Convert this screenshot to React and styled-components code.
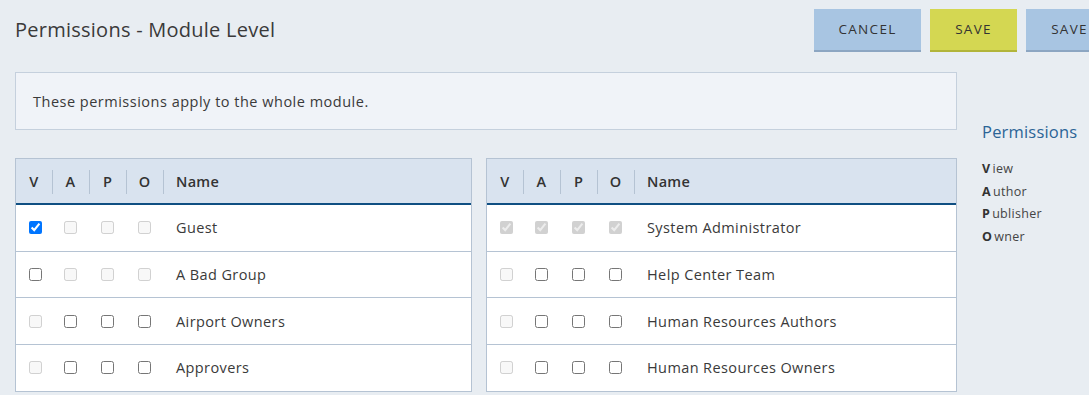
import styled, { createGlobalStyle } from "styled-components";

const GlobalStyle = createGlobalStyle`
    html, body {
        margin: 0;
        padding: 0;
        background: #e8edf2;
        overflow: hidden;
    }
    body {
        font-family: "Open Sans", "Liberation Sans", sans-serif;
        color: #333;
    }
`;

const Page = styled.div`
    display: flex;
    flex-direction: column;
    width: 1089px;
`;

const Header = styled.div`
    display: flex;
    align-items: center;
    height: 60px;
    padding-left: 15px;
`;

const Title = styled.h1`
    flex: 1;
    margin: 0;
    font-size: 20px;
    font-weight: 400;
    letter-spacing: 0.25px;
    color: #3a3a3a;
    padding-bottom: 2px;
`;

const Buttons = styled.div`
    display: flex;
    gap: 9px;
    margin-right: -24px;
    flex-shrink: 0;
`;

const Button = styled.button`
    width: ${(p) => p.$w}px;
    height: 43px;
    padding: 0;
    border: 0;
    border-bottom: 2px solid ${(p) => (p.$primary ? "#b2b53a" : "#8ca6c2")};
    background: ${(p) => (p.$primary ? "#d4d752" : "#a8c5e2")};
    color: #333;
    font-family: inherit;
    font-size: 13.5px;
    letter-spacing: 1.3px;
    white-space: nowrap;
    cursor: pointer;
`;

const Body = styled.div`
    display: flex;
    padding: 12px 0 0 15px;
`;

const Main = styled.div`
    width: 942px;
    display: flex;
    flex-direction: column;
`;

const Info = styled.div`
    height: 56px;
    display: flex;
    align-items: center;
    padding: 0 17px;
    background: #f0f3f8;
    border: 1px solid #c5d0dd;
    font-size: 14.5px;
    letter-spacing: 0.5px;
    color: #3a3a3a;
`;

const Tables = styled.div`
    display: grid;
    grid-template-columns: 457px 1fr;
    gap: 14px;
    margin-top: 28px;
`;

const Table = styled.div`
    background: #fff;
    border: 1px solid #b5c3d3;
    border-bottom: 0;
`;

const HeadRow = styled.div`
    display: grid;
    grid-template-columns: 36px 37px 37px 37px 1fr;
    height: 44px;
    background: #d9e3ef;
    border-bottom: 2px solid #0f4f82;
`;

const HeadCell = styled.div`
    position: relative;
    display: flex;
    align-items: center;
    justify-content: ${(p) => (p.$name ? "flex-start" : "center")};
    padding-left: ${(p) => (p.$name ? "13px" : "0")};
    font-size: 14.5px;
    font-weight: 600;
    letter-spacing: 0.3px;
    color: #333;

    &:not(:first-child)::before {
        content: "";
        position: absolute;
        left: 0;
        top: 11px;
        bottom: 9px;
        width: 1px;
        background: #b5c3d3;
    }
`;

const Row = styled.div`
    display: grid;
    grid-template-columns: 36px 37px 37px 37px 1fr;
    height: 45.7px;
    border-bottom: 1px solid #b5c3d3;
`;

const Cell = styled.div`
    display: flex;
    align-items: center;
    justify-content: ${(p) => (p.$name ? "flex-start" : "center")};
    padding-left: ${(p) => (p.$name ? "13px" : "0")};
    font-size: 14.5px;
    letter-spacing: 0.4px;
    color: #3a3a3a;
`;

const Box = styled.input.attrs({ type: "checkbox" })`
    width: 13px;
    height: 13px;
    margin: 0 0 0 ${(p) => (p.$first ? "2px" : "0")};
`;

const Side = styled.aside`
    padding: 48px 0 0 25px;
`;

const SideTitle = styled.h2`
    margin: 0 0 15px;
    font-size: 16.5px;
    font-weight: 400;
    letter-spacing: 0.2px;
    color: #2b6496;
`;

const Legend = styled.div`
    font-size: 12.5px;
    line-height: 22.5px;
    letter-spacing: 0.3px;
    color: #444;

    b {
        font-weight: 700;
        color: #333;
        margin-right: 2px;
    }
`;

const left = [
    { name: "Guest", v: [true, false, false, false], d: [false, true, true, true] },
    { name: "A Bad Group", v: [false, false, false, false], d: [false, true, true, true] },
    { name: "Airport Owners", v: [false, false, false, false], d: [true, false, false, false] },
    { name: "Approvers", v: [false, false, false, false], d: [true, false, false, false] },
];

const right = [
    { name: "System Administrator", v: [true, true, true, true], d: [true, true, true, true] },
    { name: "Help Center Team", v: [false, false, false, false], d: [true, false, false, false] },
    { name: "Human Resources Authors", v: [false, false, false, false], d: [true, false, false, false] },
    { name: "Human Resources Owners", v: [false, false, false, false], d: [true, false, false, false] },
];

function PermTable({ rows }) {
    return (
        <Table>
            <HeadRow>
                {["V", "A", "P", "O"].map((l) => (
                    <HeadCell key={l}>{l}</HeadCell>
                ))}
                <HeadCell $name>Name</HeadCell>
            </HeadRow>
            {rows.map((r) => (
                <Row key={r.name}>
                    {r.v.map((checked, i) => (
                        <Cell key={i}>
                            <Box $first={i === 0} defaultChecked={checked} disabled={r.d[i]} />
                        </Cell>
                    ))}
                    <Cell $name>{r.name}</Cell>
                </Row>
            ))}
        </Table>
    );
}

export default function App() {
    return (
        <Page>
            <GlobalStyle />
            <Header>
                <Title>Permissions - Module Level</Title>
                <Buttons>
                    <Button $w={107}>CANCEL</Button>
                    <Button $w={87} $primary>SAVE</Button>
                    <Button $w={87}>SAVE</Button>
                </Buttons>
            </Header>
            <Body>
                <Main>
                    <Info>These permissions apply to the whole module.</Info>
                    <Tables>
                        <PermTable rows={left} />
                        <PermTable rows={right} />
                    </Tables>
                </Main>
                <Side>
                    <SideTitle>Permissions</SideTitle>
                    <Legend>
                        <div><b>V</b>iew</div>
                        <div><b>A</b>uthor</div>
                        <div><b>P</b>ublisher</div>
                        <div><b>O</b>wner</div>
                    </Legend>
                </Side>
            </Body>
        </Page>
    );
}
